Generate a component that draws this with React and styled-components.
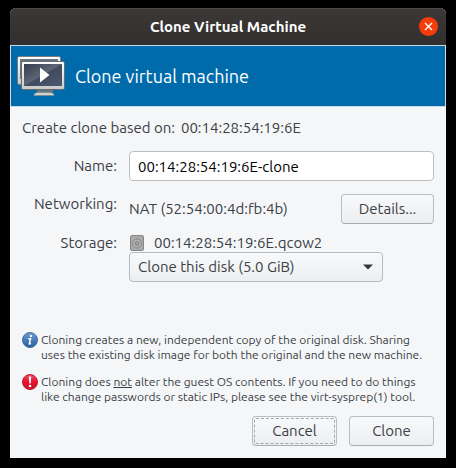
import React from "react";
import styled, { createGlobalStyle, css } from "styled-components";

const GlobalStyle = createGlobalStyle`
  *, *::before, *::after { box-sizing: border-box; }
  body {
    margin: 0;
    background: #000;
    color: #3b3e45;
    font: 15px/20px Ubuntu, "Noto Sans", sans-serif;
  }
  button, input, select { font: inherit; margin: 0; }
`;

const Desktop = styled.div`
  padding: 8px 10px 10px;
`;

const Dialog = styled.main`
  border-radius: 6px 6px 0 0;
  overflow: hidden;
  background: #f4f6f8;
`;

const TitleBar = styled.header`
  display: grid;
  grid-template-columns: 36px 1fr 36px;
  align-items: center;
  height: 37px;
  background: linear-gradient(#3c3838, #322f2f);
  box-shadow: inset 0 1px #4b4746;
`;

const Title = styled.h1`
  grid-column: 2;
  margin: 0;
  text-align: center;
  color: #fff;
  font-size: 15px;
  font-weight: 700;
`;

const CloseButton = styled.button`
  display: grid;
  place-items: center;
  justify-self: center;
  width: 19px;
  height: 19px;
  padding: 0;
  border: 0;
  border-radius: 50%;
  background: #f63c0b;
`;

const Banner = styled.div`
  display: flex;
  align-items: center;
  gap: 8px;
  height: 62px;
  padding-left: 6px;
  border: 1px solid #c5dcea;
  background: #006bab;
  color: #fff;
`;

const BannerTitle = styled.h2`
  margin: 0;
  font-size: 18px;
  line-height: 24px;
  font-weight: 400;
`;

const Content = styled.form`
  padding: 11px 12px 12px;
`;

const Source = styled.p`
  display: flex;
  gap: 6px;
  margin: 0 0 13px;
`;

const Fields = styled.div`
  display: grid;
  grid-template-columns: 95px 1fr;
  column-gap: 12px;
`;

const labelText = css`
  text-align: right;
`;

const FieldLabel = styled.label`
  ${labelText}
  padding-top: 5px;
`;

const FieldName = styled.span`
  ${labelText}
`;

const NameInput = styled.input`
  width: 100%;
  height: 30px;
  margin-bottom: 13px;
  padding: 0 8px;
  border: 1px solid #bcc0c5;
  border-radius: 4px;
  background: #fff;
  color: #000;
  outline: 0;
`;

const NetworkRow = styled.div`
  display: flex;
  align-items: center;
  justify-content: space-between;
  margin-bottom: 9px;
`;

const Button = styled.button`
  width: ${(p) => (p.$wide ? "93px" : "85px")};
  height: 30px;
  padding: 0;
  border: 1px solid #b9bdc2;
  border-bottom-color: #a9adb2;
  border-radius: 4px;
  background: linear-gradient(#f8f9fa, #eceeef);
  color: #3b3e45;
  outline: ${(p) => (p.$focused ? "1px dashed #a4a6a9" : "0")};
  outline-offset: -3px;
`;

const DiskName = styled.div`
  display: flex;
  align-items: center;
  gap: 9px;
  height: 19px;
`;

const SelectBox = styled.div`
  display: grid;
  align-items: center;
  max-width: 254px;
  & > * { grid-area: 1 / 1; }
  svg { justify-self: end; margin-right: 10px; pointer-events: none; }
`;

const Select = styled.select`
  appearance: none;
  width: 100%;
  height: 30px;
  padding: 0 28px 0 8px;
  border: 1px solid #b3bcc2;
  border-radius: 4px;
  background: linear-gradient(#f8f9fa, #eceeef);
  color: #3b3e45;
`;

const Notes = styled.div`
  display: grid;
  gap: 12px;
  margin: 50px 0 12px;
`;

const Note = styled.div`
  display: flex;
  gap: 3px;
  font-size: 12px;
  line-height: 15px;
  white-space: nowrap;
  p { margin: 0; }
  svg { flex: none; }
`;

const Actions = styled.footer`
  display: flex;
  justify-content: flex-end;
  gap: 12px;
`;

function MachinesIcon() {
  return (
    <svg width="50" height="44" viewBox="0 0 50 44" aria-hidden="true">
      <defs>
        <linearGradient id="frame" x2="0" y2="1">
          <stop stopColor="#fff" /><stop offset="1" stopColor="#c9c9c7" />
        </linearGradient>
        <linearGradient id="screen" x2="1" y2="1">
          <stop stopColor="#343d4e" /><stop offset=".48" stopColor="#5f6675" />
          <stop offset=".52" stopColor="#424b60" /><stop offset="1" stopColor="#4d5871" />
        </linearGradient>
      </defs>
      <rect x=".5" y="2.5" width="43" height="28" rx="1.5" fill="url(#frame)" stroke="#777d80" />
      <path d="M3 5h38v20H3z" fill="#6b7380" />
      <path d="M20 36h16v3H20z" fill="#5f7680" />
      <path d="M17 40.500q1-2 4-2h12q3 0 4 2v1H17z" fill="#d2d2cd" stroke="#7a8588" strokeWidth=".6" />
      <rect x="4.500" y="7.500" width="43" height="28" rx="1.500" fill="url(#frame)" stroke="#666d72" />
      <rect x="7" y="10" width="38" height="22" fill="url(#screen)" />
      <path d="M23 13.500v15l9.500-7.500z" fill="#fff" />
    </svg>
  );
}

function DiskIcon() {
  return (
    <svg width="16" height="16" viewBox="0 0 16 16" aria-hidden="true">
      <rect x="1.500" y=".5" width="13" height="15" rx="1.500" fill="#aaa" stroke="#858585" />
      <circle cx="8" cy="8.500" r="4.500" fill="#b5b5b5" stroke="#858585" />
      <circle cx="8" cy="8.500" r="2" fill="#a0a0a0" stroke="#777" strokeWidth=".8" />
    </svg>
  );
}

function InfoIcon() {
  return (
    <svg width="16" height="16" viewBox="0 0 16 16" aria-hidden="true">
      <defs>
        <linearGradient id="blue" x2="0" y2="1">
          <stop stopColor="#709dd0" /><stop offset="1" stopColor="#255da4" />
        </linearGradient>
      </defs>
      <circle cx="8" cy="8" r="7.500" fill="url(#blue)" stroke="#3d6da5" />
      <circle cx="9" cy="3.900" r="1.200" fill="#fff" />
      <path d="M6.300 6.700h2.200L7.300 11.800q.6.300 1.700-.4" fill="none" stroke="#fff" strokeWidth="1.500" />
    </svg>
  );
}

function AlertIcon() {
  return (
    <svg width="16" height="16" viewBox="0 0 16 16" aria-hidden="true">
      <defs>
        <linearGradient id="red" x2="0" y2="1">
          <stop stopColor="#f0525f" /><stop offset=".5" stopColor="#e8102c" /><stop offset="1" stopColor="#d00c26" />
        </linearGradient>
      </defs>
      <circle cx="8" cy="8" r="7.500" fill="url(#red)" stroke="#bb1c30" />
      <path d="M6.800 2.500h2.400L8.700 9.500H7.300z" fill="#fff" />
      <circle cx="8" cy="12" r="1.300" fill="#fff" />
    </svg>
  );
}

export default function App() {
  return (
    <>
      <GlobalStyle />
      <Desktop>
        <Dialog>
          <TitleBar>
            <Title>Clone Virtual Machine</Title>
            <CloseButton type="button" aria-label="Close">
              <svg width="9" height="9" viewBox="0 0 9 9" aria-hidden="true">
                <path d="M1 1l7 7M8 1L1 8" stroke="#fff" strokeWidth="1.400" />
              </svg>
            </CloseButton>
          </TitleBar>
          <Banner>
            <MachinesIcon />
            <BannerTitle>Clone virtual machine</BannerTitle>
          </Banner>
          <Content onSubmit={(e) => e.preventDefault()}>
            <Source>
              <span>Create clone based on:</span>
              <span>00:14:28:54:19:6E</span>
            </Source>
            <Fields>
              <FieldLabel htmlFor="clone-name">Name:</FieldLabel>
              <NameInput id="clone-name" defaultValue="00:14:28:54:19:6E-clone" />
              <FieldName>Networking:</FieldName>
              <NetworkRow>
                <span>NAT (52:54:00:4d:fb:4b)</span>
                <Button type="button" $wide>Details...</Button>
              </NetworkRow>
              <FieldName as="label" htmlFor="storage">Storage:</FieldName>
              <div>
                <DiskName>
                  <DiskIcon />
                  <span>00:14:28:54:19:6E.qcow2</span>
                </DiskName>
                <SelectBox>
                  <Select id="storage" defaultValue="clone">
                    <option value="clone">Clone this disk (5.0 GiB)</option>
                  </Select>
                  <svg width="10" height="6" viewBox="0 0 10 6" aria-hidden="true">
                    <path d="M0 .5h10L5 5.500z" fill="#33363a" />
                  </svg>
                </SelectBox>
              </div>
            </Fields>
            <Notes>
              <Note>
                <InfoIcon />
                <p>
                  Cloning creates a new, independent copy of the original disk. Sharing<br />
                  uses the existing disk image for both the original and the new machine.
                </p>
              </Note>
              <Note>
                <AlertIcon />
                <p>
                  Cloning does <u>not</u> alter the guest OS contents. If you need to do things<br />
                  like change passwords or static IPs, please see the virt-sysprep(1) tool.
                </p>
              </Note>
            </Notes>
            <Actions>
              <Button type="button" $focused>Cancel</Button>
              <Button type="submit">Clone</Button>
            </Actions>
          </Content>
        </Dialog>
      </Desktop>
    </>
  );
}
